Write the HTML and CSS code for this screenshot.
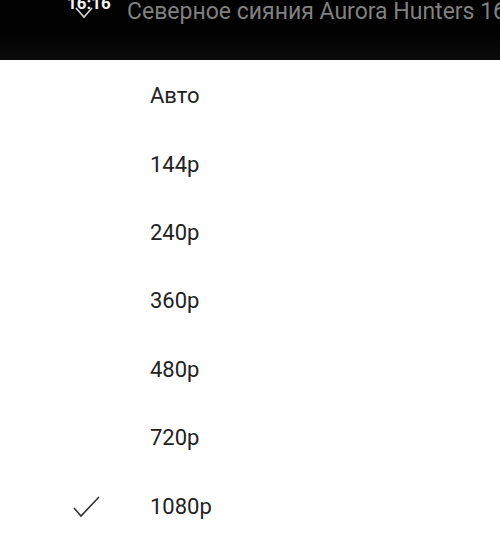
FILE: index.html
```html
<!DOCTYPE html>
<html>
<head>
<meta charset="utf-8">
<link rel="stylesheet" href="styles.css">
</head>
<body>
<div class="topbar">
  <div class="time-block">
    <span class="time">16:16</span>
    <svg class="chev" width="18" height="12" viewBox="0 0 18 12"><path d="M1 1 L9 10 L17 1" fill="none" stroke="#d8d8d8" stroke-width="1.6"/></svg>
  </div>
  <div class="title">Северное сияния Aurora Hunters 16</div>
</div>
<ul class="menu">
  <li class="item"><span class="mark"></span><span class="label">Авто</span></li>
  <li class="item"><span class="mark"></span><span class="label">144p</span></li>
  <li class="item"><span class="mark"></span><span class="label">240p</span></li>
  <li class="item"><span class="mark"></span><span class="label">360p</span></li>
  <li class="item"><span class="mark"></span><span class="label">480p</span></li>
  <li class="item"><span class="mark"></span><span class="label">720p</span></li>
  <li class="item"><span class="mark"><svg width="28" height="22" viewBox="0 0 28 22"><path d="M1 12 L8 20 L26 1" fill="none" stroke="#333" stroke-width="1.6"/></svg></span><span class="label">1080p</span></li>
</ul>
</body>
</html>
```
FILE: styles.css
```css
* { box-sizing: border-box; }
html, body {
  margin: 0;
  padding: 0;
  background: #ffffff;
  font-family: Roboto, "Noto Sans", sans-serif;
  overflow: hidden;
}
.topbar {
  height: 60px;
  background: linear-gradient(#000 0%, #030303 60%, #0b0b0b 100%);
  display: flex;
  align-items: flex-start;
  overflow: hidden;
  white-space: nowrap;
}
.time-block {
  position: relative;
  width: 127px;
  height: 60px;
  flex: none;
}
.time {
  position: absolute;
  left: 67px;
  top: -6px;
  color: #f2f2f2;
  font-weight: 700;
  font-size: 17px;
  line-height: 18px;
}
.chev {
  position: absolute;
  left: 75px;
  top: 7px;
}
.title {
  color: #808080;
  font-size: 23px;
  line-height: 26px;
  margin-top: -1px;
}
.menu {
  list-style: none;
  margin: 0;
  padding: 2px 0 0 0;
}
.item {
  height: 68.4px;
  display: flex;
  align-items: center;
  color: #222222;
  font-size: 22px;
}
.mark {
  width: 150px;
  padding-left: 73px;
  display: flex;
  align-items: center;
  height: 22px;
}
.mark svg { display: block; }
.label { line-height: 24px; }
```
